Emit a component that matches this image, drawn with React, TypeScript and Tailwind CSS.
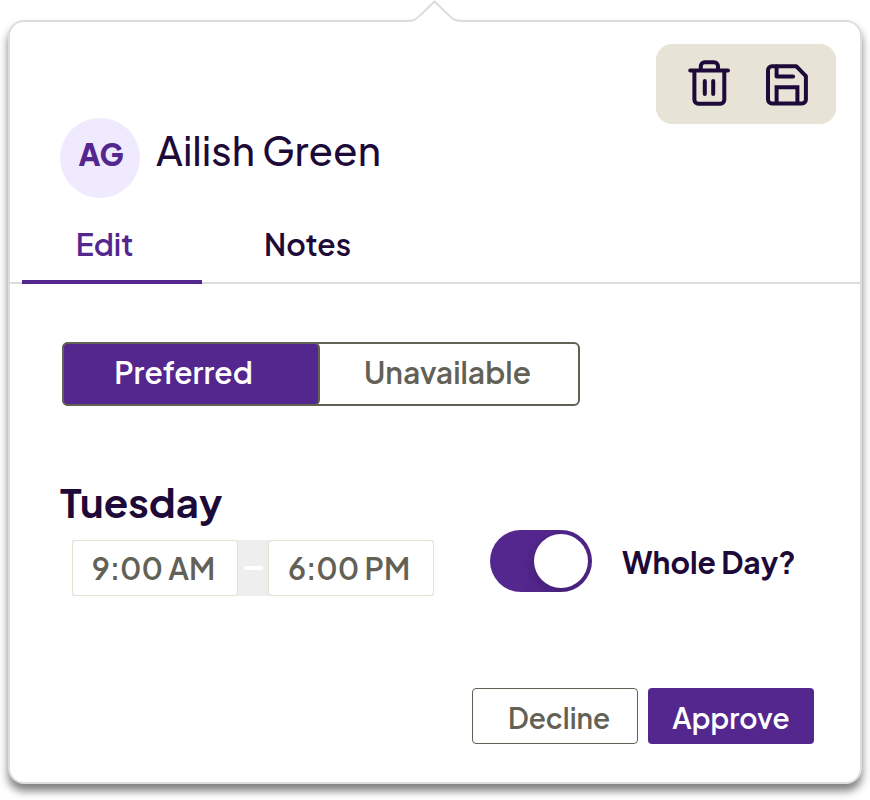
import React from "react";

function TrashIcon() {
  return (
    <svg width="48" height="56" viewBox="0 0 48 56" fill="none" stroke="#1d0a38" strokeWidth="4" strokeLinecap="round" strokeLinejoin="round">
      <path d="M6.2 14.4h37.8M10.4 14.8v28.9a4 4 0 0 0 4 4h21.9a4 4 0 0 0 4-4V14.8M16.8 13.7v-3.4a4 4 0 0 1 4-4h9.2a4 4 0 0 1 4 4v3.4M20.8 24.9v13M29.2 24.9v13" />
    </svg>
  );
}

function SaveIcon() {
  return (
    <svg width="48" height="56" viewBox="0 0 48 56" fill="none" stroke="#1d0a38" strokeWidth="4" strokeLinejoin="round">
      <path d="M10 10.2h24.2L43.9 20.2v23.4a4 4 0 0 1-4 4H10a4 4 0 0 1-4-4V14.2a4 4 0 0 1 4-4z" />
      <path d="M14.6 10.4v10.2h16.5" strokeLinecap="round" />
      <path d="M14.6 47.2V31.2h20.8v16" strokeLinejoin="miter" />
    </svg>
  );
}

export default function App() {
  return (
    <div className="h-[800px] w-[870px] overflow-hidden bg-white pt-5 pl-2 font-['Plus_Jakarta_Sans','Inter',sans-serif] text-[#1d0a38]">
      <section className="relative flex h-[764px] w-[854px] flex-col rounded-2xl border-2 border-[#dddddd] bg-white shadow-[0_7px_8px_rgba(0,0,0,0.5)]">
        <svg className="absolute -top-[22px] left-[394px]" width="64" height="26" viewBox="0 0 64 26" fill="none">
          <path d="M2 26V21C12 21 13 18 18 13.5L30.5 1.5L43 13.5C48 18 49 21 59 21V26z" fill="white" />
          <path d="M0 21H2C12 21 13 18 18 13.5L30.5 1.5L43 13.5C48 18 49 21 59 21H62" stroke="#dddddd" strokeWidth="2" />
        </svg>

        <div className="flex justify-end pt-[22px] pr-6">
          <div className="flex h-20 w-[180px] rounded-2xl bg-[#e7e3d7] pl-7">
            <button className="mt-[12px] h-14 w-12"><TrashIcon /></button>
            <button className="mt-[12px] ml-[30px] h-14 w-12"><SaveIcon /></button>
          </div>
        </div>

        <header className="-mt-[6px] flex h-20 pl-[50px]">
          <div className="flex h-20 w-20 items-center justify-center rounded-full bg-[#f0eaff] pb-[7px] pl-[2px] text-[30px] font-extrabold text-[#54278f]">
            <span>AG</span>
          </div>
          <h1 className="ml-[16px] h-[64px] text-[40px] leading-[64px] font-medium whitespace-nowrap">Ailish Green</h1>
        </header>

        <nav className="flex h-[86px] border-b-2 border-[#dddddd] pl-3 text-[30px] font-[600]">
          <button className="h-[86px] w-[180px] border-b-4 border-[#54278f] pt-[11px] pr-[15px] leading-[71px] text-[#54278f]">Edit</button>
          <button className="h-[86px] border-b-4 border-transparent pt-[11px] pl-[62px] leading-[71px]">Notes</button>
        </nav>

        <div className="mt-[58px] ml-[52px] flex h-16 w-[518px] rounded-md border-2 border-[#636156] text-[30px] font-[560] text-[#636156]">
          <button className="-m-[2px] h-16 w-[258px] rounded-md border-2 border-[#636156] bg-[#54278f] pr-[15px] pb-[3px] leading-[57px] text-white">Preferred</button>
          <button className="flex-1 pr-[1px] pb-[3px] leading-[57px]">Unavailable</button>
        </div>

        <div className="mt-[74px] flex h-[116px] pl-[50px]">
          <div className="w-[430px]">
            <h2 className="h-[60px] text-[40px] leading-[44px] font-bold">Tuesday</h2>
            <div className="ml-3 flex h-14 w-[362px] bg-[#eeeeee] text-[30px] leading-[54px] font-[600] text-[#636156]">
              <div className="w-[166px] rounded border border-[#e3e3d1] bg-white pr-[3px] text-center">9:00 AM</div>
              <div className="flex w-[30px] items-center justify-center"><i className="h-1 w-[19px] rounded-sm bg-white" /></div>
              <div className="w-[166px] rounded border border-[#e3e3d1] bg-white pr-[4px] text-center">6:00 PM</div>
            </div>
          </div>
          <div className="mt-[50px] flex h-[62px] items-center">
            <button className="flex h-[62px] w-[102px] items-center justify-end overflow-hidden rounded-full bg-[#54278f] pr-1">
              <span className="h-[54px] w-[54px] rounded-full bg-white shadow-[0_4px_16px_rgba(0,0,0,0.25)]" />
            </button>
            <span className="ml-[30px] pt-[3px] text-[30px] font-bold whitespace-nowrap">Whole Day?</span>
          </div>
        </div>

        <footer className="mt-[92px] ml-[462px] flex gap-[10px] text-[28px] leading-[57px] font-[560]">
          <button className="h-14 w-[166px] rounded border border-[#636156] pl-2 text-[#636156]">Decline</button>
          <button className="h-14 w-[166px] rounded bg-[#54278f] pt-px text-white">Approve</button>
        </footer>
      </section>
    </div>
  );
}
